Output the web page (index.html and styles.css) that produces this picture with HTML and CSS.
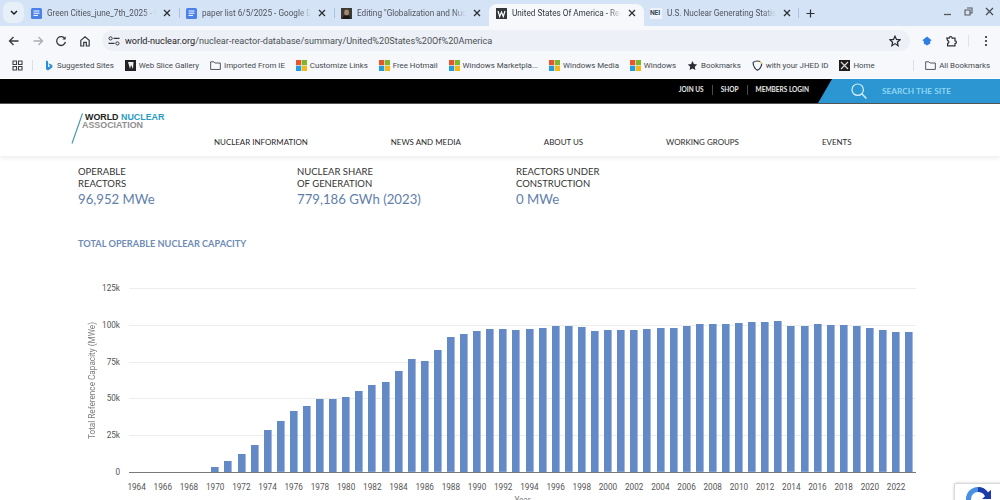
FILE: index.html
```html
<!DOCTYPE html>
<html lang="en">
<head>
<meta charset="utf-8">
<title>United States Of America - Reactor Database</title>
<link rel="stylesheet" href="styles.css">
</head>
<body>
<svg class="defs" aria-hidden="true">
  <symbol id="doc" viewBox="0 0 11 11"><rect width="11" height="11" rx="1.5" fill="#4a80e8"/><path d="M2.5 3h6M2.5 5.2h6M2.5 7.4h4.5" stroke="#fff" stroke-width="1"/></symbol>
  <symbol id="x" viewBox="0 0 8 8"><path d="M1 1l6 6M7 1L1 7" stroke="#2b2f33" stroke-width="1.3"/></symbol>
  <symbol id="ms" viewBox="0 0 11 11"><rect width="5.2" height="5.2" fill="#e8552d"/><rect x="5.8" width="5.2" height="5.2" fill="#7fb62c"/><rect y="5.8" width="5.2" height="5.2" fill="#1f9fe0"/><rect x="5.8" y="5.8" width="5.2" height="5.2" fill="#f7b719"/></symbol>
  <symbol id="folder" viewBox="0 0 12 10"><path d="M.7 1h3.6l1.2 1.3h5.8v7H.7z" fill="none" stroke="#45494e" stroke-width="1"/></symbol>
</svg>

<header class="browser">
  <div class="tabstrip">
    <button class="tab-menu"><svg width="8" height="6" viewBox="0 0 8 6"><path d="M1 1l3 3 3-3" fill="none" stroke="#1f1f1f" stroke-width="1.5"/></svg></button>
    <div class="tab">
      <svg class="fav"><use href="#doc"/></svg><span class="tab-title">Green Cities_june_7th_2025 - Google Docs</span><svg class="tab-x"><use href="#x"/></svg>
    </div>
    <div class="tab sep">
      <svg class="fav"><use href="#doc"/></svg><span class="tab-title">paper list 6/5/2025 - Google Docs</span><svg class="tab-x"><use href="#x"/></svg>
    </div>
    <div class="tab sep">
      <svg class="fav" viewBox="0 0 11 11"><rect width="11" height="11" fill="#3b3a33"/><ellipse cx="5.6" cy="4.5" rx="2.4" ry="3" fill="#a58670"/><path d="M1.5 11l1-3.5h6l1 3.5z" fill="#1c1a18"/></svg><span class="tab-title">Editing "Globalization and Nuclear Power"</span><svg class="tab-x"><use href="#x"/></svg>
    </div>
    <div class="tab active">
      <svg class="fav" viewBox="0 0 11 11"><rect width="11" height="11" fill="#33373a"/><path d="M2 3l1.7 5.5L5.5 4l1.8 4.5L9 3" fill="none" stroke="#fff" stroke-width="1.2"/></svg><span class="tab-title">United States Of America - Reactor Database</span><svg class="tab-x"><use href="#x"/></svg>
    </div>
    <div class="tab last">
      <span class="nei">NEI</span><span class="tab-title">U.S. Nuclear Generating Statistics</span><svg class="tab-x"><use href="#x"/></svg>
    </div>
    <svg class="plus" width="9" height="9" viewBox="0 0 9 9"><path d="M4.5 .5v8M.5 4.5h8" stroke="#2b2f33" stroke-width="1.2"/></svg>
    <div class="win">
      <svg width="9" height="9" viewBox="0 0 9 9"><path d="M1 7.5h7" stroke="#55595e" stroke-width="1.3"/></svg>
      <svg width="9" height="9" viewBox="0 0 9 9"><path d="M3 1h5v5H6.5M1 3h5v5H1z" fill="none" stroke="#55595e" stroke-width="1.1"/></svg>
      <svg width="9" height="9" viewBox="0 0 9 9"><path d="M1 1l7 7M8 1L1 8" stroke="#45494e" stroke-width="1.2"/></svg>
    </div>
  </div>

  <div class="toolbar">
    <svg class="tool" viewBox="0 0 12 12"><path d="M10.5 6h-9M5.5 2l-4 4 4 4" fill="none" stroke="#35393d" stroke-width="1.3"/></svg>
    <svg class="tool" viewBox="0 0 12 12"><path d="M1.5 6h9M6.5 2l4 4-4 4" fill="none" stroke="#a9adb2" stroke-width="1.3"/></svg>
    <svg class="tool" viewBox="0 0 12 12"><path d="M10 4A4.4 4.4 0 1 0 10.4 7" fill="none" stroke="#35393d" stroke-width="1.3"/><path d="M10.6 1.3v3.2H7.4z" fill="#35393d"/></svg>
    <svg class="tool" viewBox="0 0 12 12"><path d="M1.8 5.4L6 1.8l4.2 3.6V11H7.3V7.4H4.7V11H1.8z" fill="none" stroke="#35393d" stroke-width="1.2"/></svg>
    <div class="omnibox">
      <svg class="tune" viewBox="0 0 12 10"><circle cx="2.6" cy="2.4" r="1.6" fill="none" stroke="#35393d"/><path d="M5.5 2.4h6M.5 7.4h6" stroke="#35393d" stroke-width="1.1"/><circle cx="9.4" cy="7.4" r="1.6" fill="none" stroke="#35393d"/></svg>
      <span class="url"><b>world-nuclear.org</b>/nuclear-reactor-database/summary/United%20States%20Of%20America</span>
      <svg class="star" viewBox="0 0 12 12"><path d="M6 1.2l1.5 3.2 3.5.4-2.6 2.4.7 3.5L6 8.6l-3.1 2.1.7-3.5L1 4.8l3.5-.4z" fill="none" stroke="#24282c" stroke-width="1.2"/></svg>
    </div>
    <svg class="ext-a" viewBox="0 0 12 12"><path d="M6 1.5l4.6 3.7-1.4 1.1v2.2L6 10.5 2.8 8.5V6.3L1.4 5.2z" fill="#2f7fe0"/></svg>
    <svg class="ext-b" viewBox="0 0 12 12"><path d="M1.8 3.2h2.4a1.5 1.5 0 0 1 3 0h2.8v2.6a1.4 1.4 0 0 1 0 2.8v2.2H2.6V8.3a1.3 1.3 0 0 0 0-2.6z" fill="none" stroke="#2b2f33" stroke-width="1.2"/></svg>
    <span class="tool-sep"></span>
    <svg class="kebab" viewBox="0 0 4 12"><circle cx="2" cy="2" r="1.1" fill="#2b2f33"/><circle cx="2" cy="6" r="1.1" fill="#2b2f33"/><circle cx="2" cy="10" r="1.1" fill="#2b2f33"/></svg>
  </div>

  <nav class="bookmarks">
    <svg class="apps" viewBox="0 0 11 11"><path d="M1 1h3.5v3.5H1zM6.5 1H10v3.5H6.5zM1 6.5h3.5V10H1zM6.5 6.5H10V10H6.5z" fill="none" stroke="#3c4043" stroke-width="1.1"/></svg>
    <span class="bm-sep"></span>
    <a class="bm"><svg class="bm-ico" viewBox="0 0 11 11"><path d="M3 .5l2 .8v6l2.5-1.3-1.3-.7-.8-2 4 1.600v2.300L5 10.500 3 9.300z" fill="#2b8fd6"/></svg>Suggested Sites</a>
    <a class="bm"><svg class="bm-ico" viewBox="0 0 11 11"><rect width="11" height="11" fill="#222"/><path d="M3 2l2 7 1-4 2 4 .5-7z" fill="#eee"/></svg>Web Slice Gallery</a>
    <a class="bm"><svg class="bm-ico"><use href="#folder"/></svg>Imported From IE</a>
    <a class="bm"><svg class="bm-ico"><use href="#ms"/></svg>Customize Links</a>
    <a class="bm"><svg class="bm-ico"><use href="#ms"/></svg>Free Hotmail</a>
    <a class="bm"><svg class="bm-ico"><use href="#ms"/></svg>Windows Marketpla...</a>
    <a class="bm"><svg class="bm-ico"><use href="#ms"/></svg>Windows Media</a>
    <a class="bm"><svg class="bm-ico"><use href="#ms"/></svg>Windows</a>
    <a class="bm"><svg class="bm-ico" viewBox="0 0 11 11"><path d="M5.5 1l1.4 3 3.3.4-2.4 2.3.6 3.3-2.9-1.6L2.6 10l.6-3.3L.8 4.4 4.1 4z" fill="#2b2f33"/></svg>Bookmarks</a>
    <a class="bm"><svg class="bm-ico" viewBox="0 0 11 11"><path d="M1 2.5C3 1 6 .8 8 1.5M9.7 3.5C9.5 6.500 8 9 5.500 10.300 3 9 1.400 6.500 1 2.500" fill="none" stroke="#2f3b46" stroke-width="1.2"/><path d="M8 1.500l1.700 2" stroke="#e0c84a" stroke-width="1.2"/></svg>with your JHED ID</a>
    <a class="bm"><svg class="bm-ico" viewBox="0 0 11 11"><rect width="11" height="11" fill="#201c1c"/><path d="M2 2l7 7M9 2L2 9" stroke="#d8d8d8" stroke-width="1.2"/></svg>Home</a>
    <span class="bm-sep end"></span>
    <a class="bm"><svg class="bm-ico"><use href="#folder"/></svg>All Bookmarks</a>
  </nav>
</header>

<div class="site">
  <div class="topbar">
    <ul class="toplinks">
      <li>JOIN US</li>
      <li>SHOP</li>
      <li>MEMBERS LOGIN</li>
    </ul>
    <div class="search">
      <svg class="search-ico" viewBox="0 0 16 16"><circle cx="6.7" cy="6.7" r="5.7" fill="none" stroke="#d8f1fb" stroke-width="1.2"/><path d="M10.8 10.8l4.6 4.6" stroke="#d8f1fb" stroke-width="1.4"/></svg>
      <span>SEARCH THE SITE</span>
    </div>
  </div>

  <div class="mainnav">
    <div class="logo">
      <svg class="logo-slash" viewBox="0 0 12 31"><path d="M11.5 .5L1 30.5" stroke="#3e95ae" stroke-width="1.1"/></svg>
      <div class="logo-text">
        <div class="logo-l1">WORLD <em>NUCLEAR</em></div>
        <div class="logo-l2">ASSOCIATION</div>
      </div>
    </div>
    <ul class="navlinks">
      <li>NUCLEAR INFORMATION</li>
      <li>NEWS AND MEDIA</li>
      <li>ABOUT US</li>
      <li>WORKING GROUPS</li>
      <li>EVENTS</li>
    </ul>
  </div>

  <main class="content">
    <section class="stats">
      <div class="stat"><div class="stat-label">OPERABLE<br>REACTORS</div><div class="stat-value">96,952 MWe</div></div>
      <div class="stat"><div class="stat-label">NUCLEAR SHARE<br>OF GENERATION</div><div class="stat-value">779,186 GWh (2023)</div></div>
      <div class="stat"><div class="stat-label">REACTORS UNDER<br>CONSTRUCTION</div><div class="stat-value">0 MWe</div></div>
    </section>
    <h2 class="chart-title">TOTAL OPERABLE NUCLEAR CAPACITY</h2>

    <section class="chart">
      <div class="ytitle"><span>Total Reference Capacity (MWe)</span></div>
      <div class="yticks"><span>125k</span><span>100k</span><span>75k</span><span>50k</span><span>25k</span><span>0</span></div>
      <div class="plot-col">
        <div class="plot">
          <i style="height:0"></i><i style="height:0"></i><i style="height:0"></i><i style="height:0"></i><i style="height:0"></i><i style="height:0"></i>
          <i style="height:5.3px"></i><i style="height:11px"></i><i style="height:18.3px"></i><i style="height:27.3px"></i>
          <i style="height:42px"></i><i style="height:50.7px"></i><i style="height:61px"></i><i style="height:66.3px"></i>
          <i style="height:73px"></i><i style="height:73px"></i><i style="height:75px"></i><i style="height:80.7px"></i>
          <i style="height:86.7px"></i><i style="height:89.7px"></i><i style="height:101px"></i><i style="height:112.7px"></i>
          <i style="height:110.7px"></i><i style="height:121.7px"></i><i style="height:134.7px"></i><i style="height:138px"></i>
          <i style="height:141.3px"></i><i style="height:143.3px"></i><i style="height:142.7px"></i><i style="height:142px"></i>
          <i style="height:142.7px"></i><i style="height:144.3px"></i><i style="height:146.3px"></i><i style="height:145.7px"></i>
          <i style="height:145px"></i><i style="height:141px"></i><i style="height:141.7px"></i><i style="height:141.7px"></i>
          <i style="height:142.3px"></i><i style="height:143px"></i><i style="height:143.7px"></i><i style="height:144.3px"></i>
          <i style="height:145.7px"></i><i style="height:147.7px"></i><i style="height:147.7px"></i><i style="height:148.3px"></i>
          <i style="height:149px"></i><i style="height:149.7px"></i><i style="height:150.3px"></i><i style="height:151px"></i>
          <i style="height:145.7px"></i><i style="height:145.7px"></i><i style="height:147.7px"></i><i style="height:147px"></i>
          <i style="height:147px"></i><i style="height:146.3px"></i><i style="height:144.3px"></i><i style="height:141.7px"></i>
          <i style="height:140.3px"></i><i style="height:140.3px"></i>
        </div>
        <div class="xticks">
          <span>1964</span><span>1966</span><span>1968</span><span>1970</span><span>1972</span><span>1974</span>
          <span>1976</span><span>1978</span><span>1980</span><span>1982</span><span>1984</span><span>1986</span>
          <span>1988</span><span>1990</span><span>1992</span><span>1994</span><span>1996</span><span>1998</span>
          <span>2000</span><span>2002</span><span>2004</span><span>2006</span><span>2008</span><span>2010</span>
          <span>2012</span><span>2014</span><span>2016</span><span>2018</span><span>2020</span><span>2022</span>
        </div>
        <div class="xtitle">Year</div>
      </div>
    </section>
  </main>
</div>

<div class="recaptcha">
  <svg viewBox="0 0 30 30" width="30" height="30"><path d="M15 3a12 12 0 0 1 10 5.3l3-2.3v9H19l3-2.8A8 8 0 0 0 15 8z" fill="#1c3aa9"/><path d="M15 3A12 12 0 0 0 3 15h5a7 7 0 0 1 7-7z" fill="#4a90e2"/><path d="M3 15a12 12 0 0 0 12 12v-5a7 7 0 0 1-7-7z" fill="#4a90e2"/></svg>
</div>
</body>
</html>
```

FILE: styles.css
```css
* { box-sizing: border-box; }
html, body { margin: 0; padding: 0; }
body {
  width: 1000px;
  height: 500px;
  overflow: hidden;
  position: relative;
  background: #fff;
  font-family: Roboto, "Liberation Sans", sans-serif;
  color: #333;
}
ul { list-style: none; margin: 0; padding: 0; }
.defs { display: none; }

/* ---------- browser chrome ---------- */
.browser { background: #f6f8fc; height: 78px; }

.tabstrip {
  display: flex;
  align-items: center;
  height: 26px;
  background: #d5e3f6;
  position: relative;
}
.tab-menu {
  flex: 0 0 21px;
  margin-left: 3px;
  height: 21px;
  margin-top: -1px;
  border: 0;
  border-radius: 7px;
  background: #e7eff9;
  padding: 0;
  display: flex;
  align-items: center;
  justify-content: center;
}
.tab {
  flex: 0 0 155px;
  min-width: 0;
  height: 26px;
  display: flex;
  align-items: center;
  padding: 0 8px 0 7px;
  position: relative;
  font-size: 8.2px;
  color: #50555b;
}
.tab.sep::before, .tab.last::after {
  content: "";
  position: absolute;
  left: 0;
  top: 8px;
  height: 10px;
  width: 1px;
  background: #a9c1e2;
}
.tab.last::after { left: auto; right: 0; }
.tab.active {
  background: #f6f8fc;
  border-radius: 8px 8px 0 0;
  color: #33373b;
  margin-top: 4px;
  height: 22px;
  padding-bottom: 4px;
}
.fav { flex: 0 0 11px; width: 11px; height: 11px; }
.nei {
  flex: 0 0 12px;
  font-size: 6.8px;
  font-weight: 700;
  color: #3c4a5a;
  background: #eef3fa;
  line-height: 11px;
  margin-left: -1px;
  letter-spacing: -.2px;
}
.tab-title {
  flex: 1;
  min-width: 0;
  margin-left: 5px;
  white-space: nowrap;
  overflow: hidden;
  -webkit-mask-image: linear-gradient(to right, #000 88%, transparent 100%);
  mask-image: linear-gradient(to right, #000 88%, transparent 100%);
}
.tab-x { flex: 0 0 8px; width: 8px; height: 8px; margin-left: 7px; }
.plus { margin-left: 7px; }
.win {
  margin-left: auto;
  margin-right: 6px;
  display: flex;
  gap: 12px;
  align-self: flex-start;
  margin-top: 7px;
}

.toolbar {
  height: 26px;
  display: flex;
  align-items: center;
  padding-left: 8px;
  padding-top: 3px;
}
.tool { flex: 0 0 12px; width: 12px; height: 12px; margin-right: 11.5px; }
.omnibox {
  flex: 0 0 808px;
  height: 21px;
  border-radius: 11px;
  background: #edf0f6;
  display: flex;
  align-items: center;
  padding-left: 6px;
}
.tune { width: 12px; height: 10px; flex: 0 0 12px; }
.url {
  margin-left: 5px;
  font-size: 9.15px;
  color: #4c5055;
  white-space: nowrap;
}
.url b { font-weight: 400; color: #1f2226; }
.star { width: 12px; height: 12px; margin-left: auto; margin-right: 9px; }
.ext-a { width: 12px; height: 12px; margin-left: 11px; }
.ext-b { width: 12px; height: 12px; margin-left: 12px; }
.tool-sep { width: 1px; height: 12px; background: #dfe3e9; margin-left: 11px; }
.kebab { width: 4px; height: 12px; margin-left: 15px; }

.bookmarks {
  height: 26px;
  display: flex;
  align-items: center;
  padding-left: 12px;
  font-size: 7.9px;
  color: #44484d;
}
.apps { width: 11px; height: 11px; flex: 0 0 11px; }
.bm-sep { width: 1px; height: 11px; background: #d7e0ec; margin: 0 10px 0 9px; }
.bm-sep.end { margin: 0 11px 0 auto; }
.bm { display: flex; align-items: center; gap: 3px; white-space: nowrap; margin-right: 10.9px; }
.bm:last-child { margin-right: 10px; }
.bm-ico { width: 11px; height: 11px; flex: 0 0 11px; }

/* ---------- site ---------- */
.site { font-family: Lato, "Noto Sans", sans-serif; }

.topbar {
  height: 25px;
  background: #000;
  display: flex;
  justify-content: flex-end;
  align-items: stretch;
  border-bottom: 1px solid #555;
  margin-top: 1px;
}
.toplinks {
  display: flex;
  align-items: center;
  padding-bottom: 3px;
  margin-right: 1px;
  color: #e8e8e8;
  font-size: 6.5px;
  font-weight: 700;
}
.toplinks li { padding: 0 8px; border-right: 1px solid #4a4a4a; line-height: 10px; }
.toplinks li:last-child { border-right: 0; }
.search {
  width: 182px;
  background: #2b96d2;
  clip-path: polygon(14px 0, 100% 0, 100% 100%, 0 100%);
  display: flex;
  align-items: center;
  padding-left: 33px;
  gap: 15px;
  color: #8fd5f3;
  font-size: 8.3px;
  font-weight: 700;
}
.search-ico { width: 16px; height: 16px; }

.mainnav {
  height: 52px;
  display: flex;
  padding-left: 71px;
  background: #fff;
  box-shadow: 0 2px 5px rgba(0, 0, 0, .08);
  position: relative;
}
.logo { flex: 0 0 143px; display: flex; align-items: flex-start; padding-top: 9px; }
.logo-slash { width: 12px; height: 31px; flex: 0 0 12px; }
.logo-text {
  margin-left: -1px;
  font-family: "Liberation Sans", Arial, sans-serif;
  font-weight: 700;
  font-size: 8.9px;
  line-height: 8px;
}
.logo-l1 { color: #222; padding-left: 3px; }
.logo-l1 em { font-style: normal; color: #2a9cc4; }
.logo-l2 { color: #8f8f8f; }
.navlinks {
  display: flex;
  gap: 83px;
  font-size: 7.95px;
  color: #2a2a2a;
  padding-top: 32px;
}
.navlinks li { line-height: 12px; white-space: nowrap; }

.content { padding: 10px 0 0; }
.stats { display: flex; padding-left: 78px; }
.stat { flex: 0 0 219px; }
.stat-label { font-size: 9.5px; line-height: 12px; color: #333; }
.stat-value { font-size: 13.2px; line-height: 18px; color: #5f80ab; }
.chart-title {
  margin: 30px 0 0 78px;
  font-size: 9.2px;
  line-height: 12px;
  font-weight: 700;
  color: #6f8cb6;
}

.chart {
  display: flex;
  align-items: flex-start;
  margin-top: 38px;
  padding-left: 87px;
  font-family: Roboto, "Liberation Sans", sans-serif;
}
.ytitle {
  flex: 0 0 10px;
  height: 184px;
  display: flex;
  align-items: center;
  justify-content: center;
}
.ytitle span {
  writing-mode: vertical-rl;
  transform: rotate(180deg);
  font-size: 8.2px;
  color: #7c7c7c;
  white-space: nowrap;
}
.yticks {
  flex: 0 0 23px;
  height: 184px;
  display: flex;
  flex-direction: column;
  justify-content: space-between;
  align-items: flex-end;
  font-size: 8.2px;
  line-height: 0;
  color: #555;
  margin-right: 9px;
}
.plot-col { flex: 0 0 787px; }
.plot {
  height: 185px;
  display: flex;
  align-items: flex-end;
  padding-left: 1px;
  border-bottom: 1px solid #7a7a7a;
  background: repeating-linear-gradient(to bottom, #ededed 0 1px, transparent 1px 36.8px);
}
.plot i {
  flex: 0 0 13.096px;
  display: block;
  background: linear-gradient(#6389c6, #6389c6) center / 7.6px 100% no-repeat;
}
.xticks {
  display: flex;
  margin-left: -5.5px;
  margin-top: 9px;
  font-size: 8.2px;
  line-height: 10px;
  color: #555;
}
.xticks span { flex: 0 0 26.192px; text-align: center; }
.xtitle { text-align: center; font-size: 8.2px; line-height: 10px; color: #777; margin-top: 3px; }

.recaptcha {
  position: absolute;
  left: 954px;
  top: 483px;
  width: 60px;
  height: 30px;
  background: #fff;
  border: 1px solid #d9d9d9;
  border-radius: 2px;
  box-shadow: 0 0 3px rgba(0, 0, 0, .2);
  padding-left: 8px;
}
```
